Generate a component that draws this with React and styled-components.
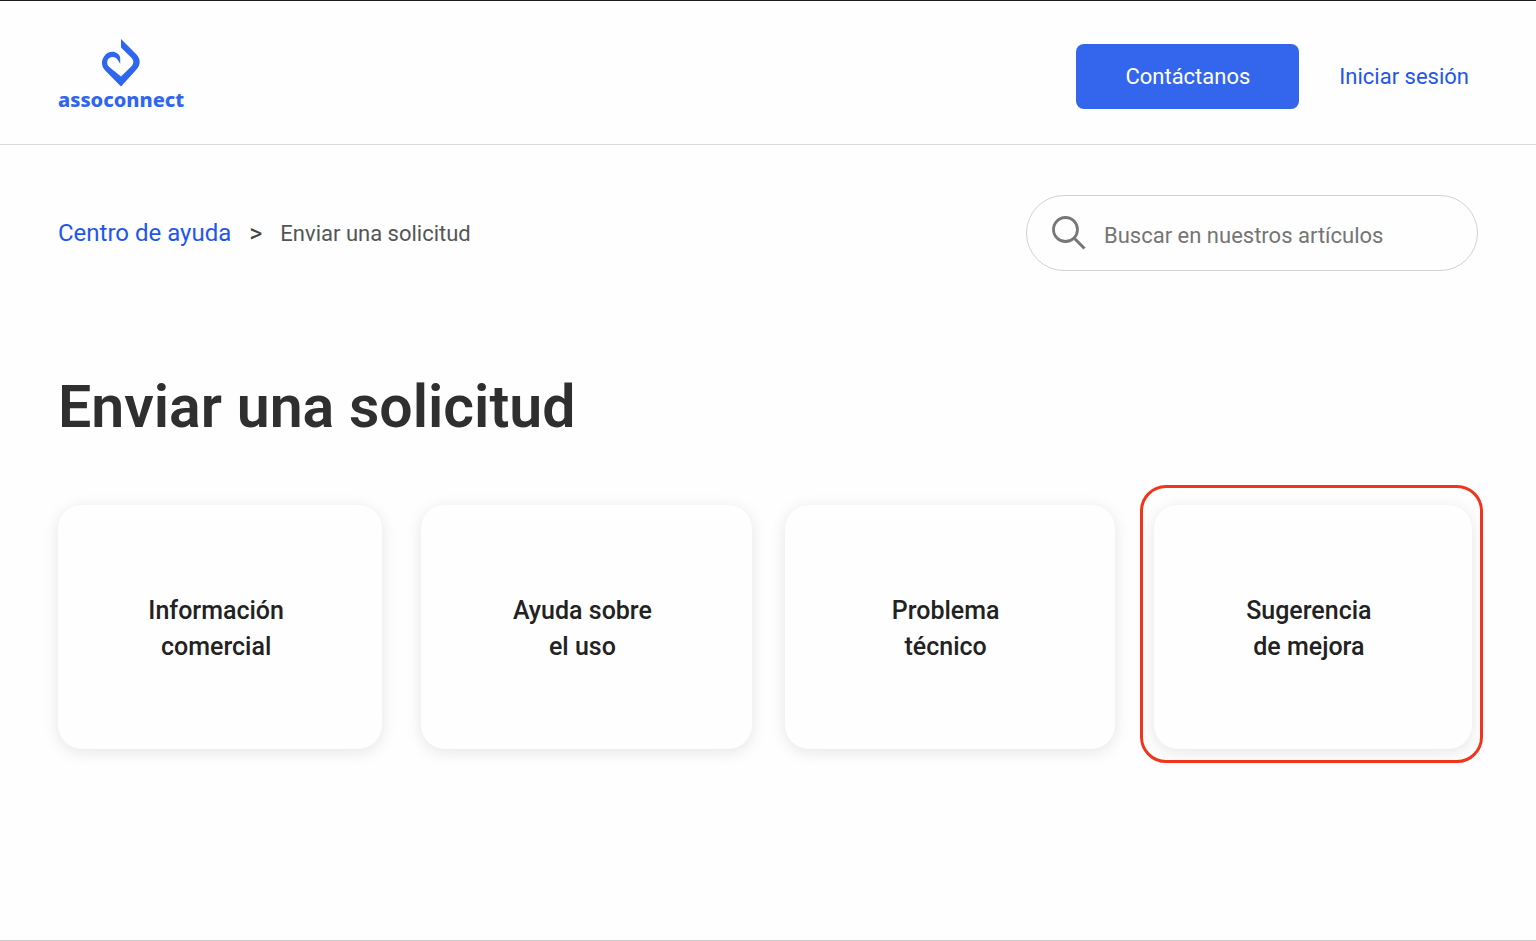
import React, { useState } from "react";
import styled, { createGlobalStyle } from "styled-components";

const GlobalStyle = createGlobalStyle`
  * {
    box-sizing: border-box;
  }

  body {
    margin: 0;
    background-color: #fefefe;
    color: #2f2f2f;
    font-family: Roboto, "Liberation Sans", sans-serif;
  }
`;

const cards = [
  { id: "info", lines: ["Información", "comercial"] },
  { id: "ayuda", lines: ["Ayuda sobre", "el uso"] },
  { id: "problema", lines: ["Problema", "técnico"] },
  { id: "sugerencia", lines: ["Sugerencia", "de mejora"], selected: true },
];

const App = () => {
  const [search, setSearch] = useState("");

  const onSubmitHandler = (e) => {
    e.preventDefault();
  };

  return (
    <Page>
      <GlobalStyle />
      <Header>
        <Logo href="#">
          <svg width="40" height="50" viewBox="0 0 40 50" aria-hidden="true">
            <path
              fill="#2f66f0"
              d="M20 1 L34.8 15.8 C40 21 40 27 34.8 32.2 L20 48.4 L4.2 32.4 C0.2 28.4 0 22.4 3.2 18.2 C6.4 13.6 12.4 12.6 16.4 15.4 C18.4 16.8 19.2 18.2 19.2 20.4 L19.2 26 C17.2 22 15.2 19 11.8 19 C8.4 19 6.2 21.4 6.2 24.4 C6.2 26.2 6.8 27.6 8.2 29 L20 38.6 L30.2 28.6 C33 25.8 33 22.4 30.2 19.6 L20 9.6 Z"
            />
          </svg>
          <Brand>assoconnect</Brand>
        </Logo>
        <Nav>
          <ContactButton type="button">Contáctanos</ContactButton>
          <LoginLink href="#">Iniciar sesión</LoginLink>
        </Nav>
      </Header>

      <Main>
        <TopRow>
          <Breadcrumb aria-label="Ruta">
            <CrumbLink href="#">Centro de ayuda</CrumbLink>
            <Separator>&gt;</Separator>
            <Crumb>Enviar una solicitud</Crumb>
          </Breadcrumb>
          <SearchForm onSubmit={onSubmitHandler}>
            <svg width="34" height="34" viewBox="0 0 34 34" fill="none" stroke="#777" aria-hidden="true">
              <circle cx="13.5" cy="13.5" r="12" strokeWidth="2.8" />
              <path d="M22 22 L32.5 32.5" strokeWidth="3" />
            </svg>
            <SearchInput
              type="search"
              aria-label="Buscar en nuestros artículos"
              placeholder="Buscar en nuestros artículos"
              value={search}
              onChange={(e) => setSearch(e.target.value)}
            />
          </SearchForm>
        </TopRow>

        <Title>Enviar una solicitud</Title>

        <CardGrid>
          {cards.map((card) => (
            <CardSlot key={card.id} $selected={card.selected}>
              <Card type="button">
                {card.lines.map((line) => (
                  <span key={line}>{line}</span>
                ))}
              </Card>
            </CardSlot>
          ))}
        </CardGrid>
      </Main>
    </Page>
  );
};

export default App;

const Page = styled.div`
  min-height: 100vh;
  border-top: 1px solid #1c1c1c;
  border-bottom: 1px solid #c8c8c8;
`;

const Header = styled.header`
  display: flex;
  align-items: center;
  justify-content: space-between;
  padding: 37px 67px 33px 58px;
  border-bottom: 1px solid #d9d9d9;
`;

const Logo = styled.a`
  display: flex;
  flex-direction: column;
  align-items: center;
  text-decoration: none;
`;

const Brand = styled.span`
  color: #2f66f0;
  font-family: "Noto Sans", sans-serif;
  font-size: 20px;
  font-weight: 800;
  line-height: 23px;
`;

const Nav = styled.nav`
  display: flex;
  align-items: center;
  gap: 40px;
  padding-top: 4px;
`;

const ContactButton = styled.button`
  padding: 0 49px;
  border: 0;
  border-radius: 8px;
  background-color: #3366ec;
  color: #fff;
  font-family: inherit;
  font-size: 22px;
  line-height: 65px;
  cursor: pointer;
`;

const LoginLink = styled.a`
  color: #1f56ee;
  font-size: 22px;
  text-decoration: none;
`;

const Main = styled.main`
  padding: 50px 58px 190px;
`;

const TopRow = styled.div`
  display: flex;
  align-items: center;
  justify-content: space-between;
`;

const Breadcrumb = styled.nav`
  display: flex;
  align-items: center;
  gap: 18px;
  font-size: 22px;
`;

const CrumbLink = styled.a`
  color: #1f56ee;
  font-size: 24px;
  text-decoration: none;
`;

const Separator = styled.span`
  color: #444;
  font-size: 25px;
`;

const Crumb = styled.span`
  color: #555;
`;

const SearchForm = styled.form`
  display: flex;
  align-items: center;
  gap: 18px;
  width: 452px;
  height: 76px;
  padding: 0 25px;
  border: 1px solid #d2d2d2;
  border-radius: 38px;
`;

const SearchInput = styled.input`
  flex: 1;
  min-width: 0;
  padding: 4px 0 0;
  border: 0;
  outline: 0;
  background: transparent;
  color: #2f2f2f;
  font-family: inherit;
  font-size: 22px;

  &::placeholder {
    color: #757575;
    opacity: 1;
  }
`;

const Title = styled.h1`
  margin: 100px 0 62px;
  color: #2f2f2f;
  font-size: 59px;
  font-weight: 600;
  line-height: 72px;
`;

const CardGrid = styled.div`
  display: grid;
  grid-template-columns: repeat(4, 1fr);
  gap: 33px;
`;

const CardSlot = styled.div`
  position: relative;
  display: flex;

  &:first-child {
    padding-right: 6px;
  }

  &:last-child {
    padding: 0 6px;
  }

  /* red outline around the highlighted option */
  &::after {
    content: "";
    display: ${(props) => (props.$selected ? "block" : "none")};
    position: absolute;
    inset: -20px -5px -14px -8px;
    border: 3px solid #f0351c;
    border-radius: 26px;
    pointer-events: none;
  }
`;

const Card = styled.button`
  flex: 1;
  display: flex;
  flex-direction: column;
  align-items: center;
  justify-content: center;
  min-height: 244px;
  padding: 4px 18px 0 10px;
  border: 0;
  border-radius: 24px;
  background-color: #fefefe;
  box-shadow: 0 3px 16px rgba(0, 0, 0, 0.1);
  color: #222;
  font-family: inherit;
  font-size: 25px;
  font-weight: 500;
  line-height: 36px;
  cursor: pointer;
`;
